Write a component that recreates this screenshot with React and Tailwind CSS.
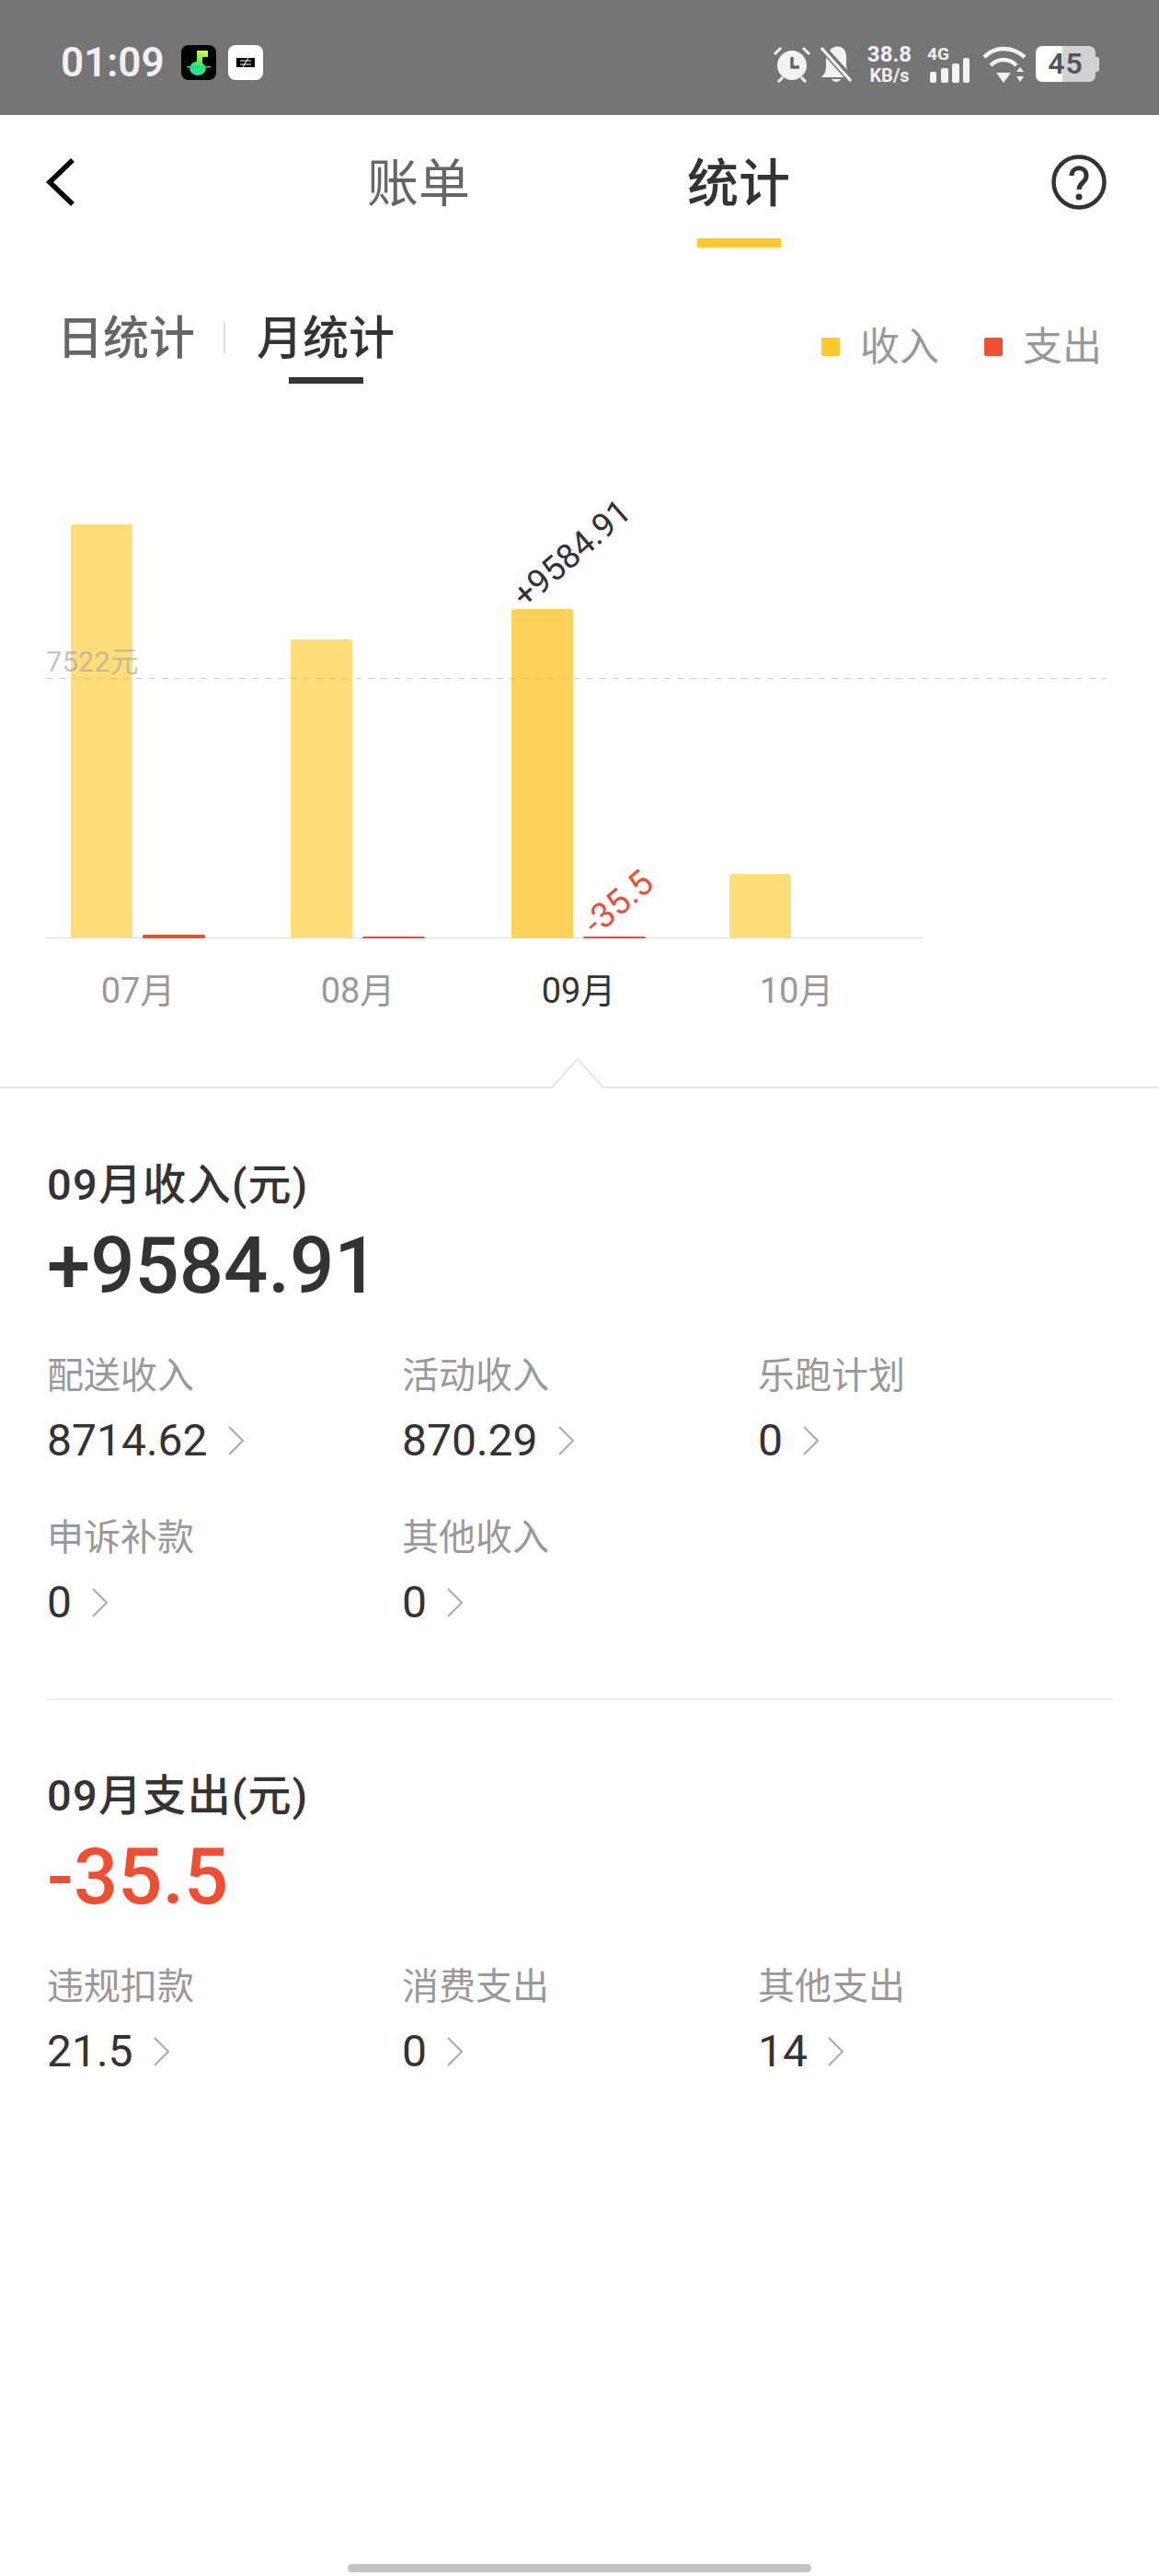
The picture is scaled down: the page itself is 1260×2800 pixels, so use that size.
import React from 'react';

const RED = '#EE4F32';

const Chevron = () => (
    <svg width="20" height="32" viewBox="0 0 20 32" fill="none" stroke="#aaaaaa" strokeWidth="2">
        <path d="M3 1 L18 16 L3 31" />
    </svg>
);

const StatItem = ({ label, value }) => (
    <div className="flex flex-col">
        <div className="text-[40px] leading-[48px] text-[#999999]">{label}</div>
        <div className="mt-[18px] flex items-center gap-[20px] text-[48px] leading-[56px] text-[#333333]">
            <span>{value}</span>
            <Chevron />
        </div>
    </div>
);

const StatusIcons = () => (
    <div className="flex items-center text-[#f0f0f0]">
        {/* alarm */}
        <svg width="42" height="40" viewBox="0 0 42 40" fill="#f2f2f2">
            <circle cx="21" cy="21" r="16" />
            <path d="M2 9 L9 2 M33 2 L40 9 M6 39 L11 34 M36 39 L31 34" stroke="#f2f2f2" strokeWidth="3" />
            <path d="M21 12 V23 H29" stroke="#666666" strokeWidth="3.5" fill="none" />
        </svg>
        {/* muted bell */}
        <svg className="ml-[10px]" width="34" height="40" viewBox="0 0 34 40" fill="#f2f2f2">
            <path d="M6 12 L26 34 H1 C4 31 6 28 6 22 Z" />
            <path d="M10 5 C13 0 21 -1 25 3 C29 7 28 14 28 22 L29 26 Z" />
            <path d="M12 36 H22 C20 40 14 40 12 36 Z" />
            <path d="M1 2 L33 38" stroke="#757575" strokeWidth="6" />
            <path d="M1 2 L33 38" stroke="#f2f2f2" strokeWidth="3" />
        </svg>
        <div className="ml-[14px] flex w-[54px] flex-col items-center font-bold">
            <span className="text-[24px] leading-[22px]">38.8</span>
            <span className="mt-[3px] text-[20px] leading-[18px]">KB/s</span>
        </div>
        <div className="relative ml-[14px] h-[40px] w-[48px]">
            <span className="absolute left-0 top-0 text-[19px] font-bold leading-[18px]">4G</span>
            <svg className="absolute left-0 top-0" width="48" height="40" viewBox="0 0 48 40" fill="#f2f2f2">
                <rect x="3" y="28" width="7" height="12" rx="2" />
                <rect x="15" y="24" width="8" height="16" rx="2" />
                <rect x="27" y="19" width="8" height="21" rx="2" />
                <rect x="39" y="13" width="7" height="27" rx="2" />
            </svg>
        </div>
        {/* wifi */}
        <svg className="ml-[12px]" width="48" height="40" viewBox="0 0 48 40" fill="none" stroke="#f2f2f2" strokeWidth="4.5">
            <path d="M2 12 C14 0 32 0 46 12" />
            <path d="M9 21 C17 13 29 13 37 21" />
            <path d="M15 29 L23 40 L31 29 Z" fill="#f2f2f2" stroke="none" />
            <path d="M37 28 L41 23 L45 28 Z M37 33 L41 39 L45 33 Z" fill="#f2f2f2" stroke="none" />
        </svg>
        {/* battery */}
        <div className="relative ml-[10px] flex h-[39px] w-[65px] overflow-hidden rounded-[7px]">
            <div className="w-[29px] bg-white" />
            <div className="flex-1 bg-[#d2d2d2]" />
            <span className="absolute inset-0 text-center text-[32px] font-semibold leading-[39px] tracking-[1px] text-[#555555]">45</span>
        </div>
        <div className="h-[16px] w-[4px] rounded-r-[2px] bg-[#d2d2d2]" />
    </div>
);

const StatusBar = () => (
    <div className="flex h-[125px] shrink-0 items-start justify-between bg-[#757575] pl-[66px] pr-[65px] pt-[48px]">
        <div className="flex items-center">
            <span className="text-[44px] font-semibold leading-[40px] text-[#f0f0f0]">01:09</span>
            <svg className="ml-[18px]" width="38" height="38" viewBox="0 0 38 38">
                <defs>
                    <linearGradient id="note" x1="0.7" y1="0" x2="0.3" y2="1">
                        <stop offset="0" stopColor="#d8f83c" />
                        <stop offset="0.6" stopColor="#2fe86a" />
                        <stop offset="1" stopColor="#22e0b0" />
                    </linearGradient>
                </defs>
                <rect width="38" height="38" rx="8" fill="#000000" />
                <path d="M17 6 H29 V13 H23 V20 C28 22 29 31 19 33 C10 33 7 25 11 21 C13 18 16 18 17 18 Z" fill="url(#note)" />
                <rect x="6" y="23" width="26" height="1.5" fill="#1fd08a" />
            </svg>
            <svg className="ml-[13px]" width="38" height="38" viewBox="0 0 38 38">
                <rect width="38" height="38" rx="8" fill="#ffffff" />
                <rect x="9" y="14" width="20" height="10" fill="#000000" />
                <path d="M13 17 H25 M13 21 H25 M22 14 L16 24" stroke="#ffffff" strokeWidth="1" />
            </svg>
        </div>
        <StatusIcons />
    </div>
);

const Header = () => (
    <div className="flex h-[185px] shrink-0 items-start pl-[50px] pt-[43px]">
        <svg className="mt-[4px] shrink-0" width="32" height="52" viewBox="0 0 32 52" fill="none" stroke="#000000" strokeWidth="5.5">
            <path d="M29 2 L4 26 L29 50" />
        </svg>
        <span className="ml-[317px] shrink-0 whitespace-nowrap text-[56px] leading-[64px] text-[#666666]">账单</span>
        <div className="ml-[236px] flex shrink-0 flex-col items-center">
            <span className="whitespace-nowrap text-[56px] font-medium leading-[64px] text-[#333333]">统计</span>
            <div className="mt-[27px] h-[10px] w-[91px] bg-[#FFC92E]" />
        </div>
        <svg className="ml-[284px] shrink-0" width="60" height="60" viewBox="0 0 60 60" fill="none">
            <circle cx="30" cy="30" r="27.5" stroke="#333333" strokeWidth="4.5" />
            <path d="M22 23 C22 12 38 12 38 23 C38 31 30 30 30 38" stroke="#333333" strokeWidth="5" />
            <circle cx="30" cy="46" r="3.5" fill="#333333" />
        </svg>
    </div>
);

const SubTabs = () => (
    <div className="flex h-[110px] shrink-0 items-start pl-[62px] pr-[62px] pt-[28px]">
        <span className="whitespace-nowrap text-[50px] font-medium leading-[60px] text-[#666666]">日统计</span>
        <div className="ml-[31px] mt-[12px] h-[34px] w-[2px] bg-[#dddddd]" />
        <div className="ml-[34px] flex flex-col items-center">
            <span className="whitespace-nowrap text-[50px] font-medium leading-[60px] text-[#333333]">月统计</span>
            <div className="mt-[12px] h-[7px] w-[81px] bg-[#333333]" />
        </div>
        <div className="ml-auto mt-[13px] flex items-center">
            <div className="h-[20px] w-[20px] rounded-[2px] bg-[#FFC92E]" />
            <span className="ml-[22px] text-[43px] leading-[52px] text-[#999999]">收入</span>
            <div className="ml-[49px] h-[20px] w-[20px] rounded-[2px] bg-[#EE4F32]" />
            <span className="ml-[22px] text-[43px] leading-[52px] text-[#999999]">支出</span>
        </div>
    </div>
);

const bars = [
    { x: 77, top: 570, color: '#FFDD78' },
    { x: 316, top: 695, color: '#FFDD78' },
    { x: 556, top: 662, color: '#FFD35A' },
    { x: 793, top: 950, color: '#FFDD78' },
];
const outs = [
    { x: 155, top: 1016 },
    { x: 394, top: 1018 },
    { x: 634, top: 1018 },
];
const months = [
    { label: '07月', x: 150 },
    { label: '08月', x: 389 },
    { label: '09月', x: 629, active: true },
    { label: '10月', x: 866 },
];

// viewBox keeps page coordinates so the chart reads like the screenshot
const Chart = () => (
    <svg className="block shrink-0" width="1260" height="763" viewBox="0 420 1260 763">
        <line x1="50" x2="1003" y1="1019.5" y2="1019.5" stroke="#dddddd" strokeWidth="1" />
        {bars.map((b) => (
            <path key={b.x} d={`M${b.x} 1020 V${b.top + 3} Q${b.x} ${b.top} ${b.x + 3} ${b.top} H${b.x + 64} Q${b.x + 67} ${b.top} ${b.x + 67} ${b.top + 3} V1020 Z`} fill={b.color} />
        ))}
        {outs.map((b) => (
            <rect key={b.x} x={b.x} y={b.top} width="68" height={1020 - b.top} rx="1.5" fill={RED} />
        ))}
        <text x="50" y="730" fontSize="31" fill="#aaaaaa" fillOpacity="0.7">7522元</text>
        <line x1="50" x2="1203" y1="737.5" y2="737.5" stroke="#aaaaaa" strokeOpacity="0.6" strokeWidth="1" strokeDasharray="7 7" />
        <text x="0" y="0" fontSize="37" fill="#333333" transform="translate(571 662) rotate(-41)">+9584.91</text>
        <text x="0" y="0" fontSize="38" fill="#E8513A" transform="translate(648 1018) rotate(-40)">-35.5</text>
        {months.map((m) => (
            <text key={m.label} x={m.x} y="1090" textAnchor="middle" fontSize="38" fill={m.active ? '#333333' : '#999999'}>{m.label}</text>
        ))}
        <path d="M0 1182 H600 L628 1151 L656 1182 H1260" fill="#ffffff" stroke="#dddddd" strokeWidth="1.5" />
    </svg>
);

const Section = ({ title, amount, amountClass, items }) => (
    <div className="px-[51px]">
        <div className="text-[47px] font-medium leading-[56px] tracking-[1.3px] text-[#333333]">{title}</div>
        <div className={`mt-[10px] text-[85px] font-medium leading-[100px] ${amountClass}`}>{amount}</div>
        <div className="mt-[46px] grid grid-cols-[386px_387px_1fr] gap-y-[54px]">
            {items.map((it) => (
                <StatItem key={it.label} label={it.label} value={it.value} />
            ))}
        </div>
    </div>
);

export default function App() {
    const income = [
        { label: '配送收入', value: '8714.62' },
        { label: '活动收入', value: '870.29' },
        { label: '乐跑计划', value: '0' },
        { label: '申诉补款', value: '0' },
        { label: '其他收入', value: '0' },
    ];
    const expense = [
        { label: '违规扣款', value: '21.5' },
        { label: '消费支出', value: '0' },
        { label: '其他支出', value: '14' },
    ];

    return (
        <div className="flex h-[2800px] w-[1260px] flex-col overflow-hidden bg-white font-['Roboto','Noto_Sans_CJK_SC',sans-serif]">
            <StatusBar />
            <Header />
            <SubTabs />
            <Chart />
            <div className="mt-[77px]">
                <Section title="09月收入(元)" amount="+9584.91" amountClass="text-[#333333]" items={income} />
            </div>
            <div className="mx-[50px] mt-[76px] h-[2px] shrink-0 bg-[#eeeeee]" />
            <div className="mt-[76px]">
                <Section title="09月支出(元)" amount="-35.5" amountClass="text-[#EE4F32]" items={expense} />
            </div>
            <div className="mx-auto mb-[4px] mt-auto h-[9px] w-[504px] rounded-full bg-[#c4c4c4]" />
        </div>
    );
}
